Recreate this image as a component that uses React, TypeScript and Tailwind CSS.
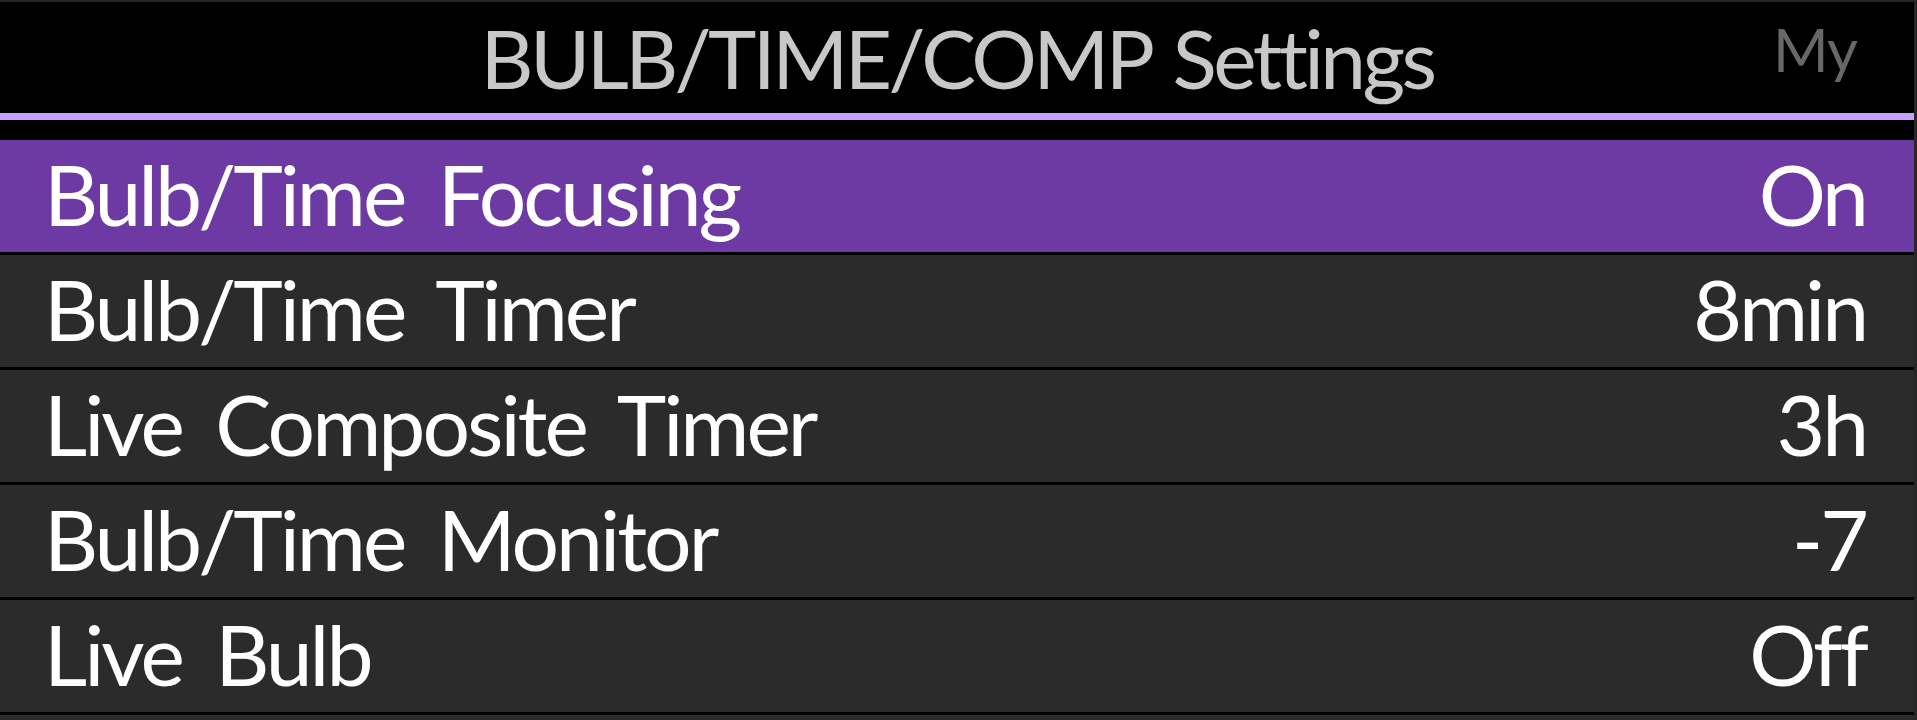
import React from 'react';

const rows = [
  { label: 'Bulb/Time Focusing', value: 'On' },
  { label: 'Bulb/Time Timer', value: '8min' },
  { label: 'Live Composite Timer', value: '3h' },
  { label: 'Bulb/Time Monitor', value: '-7' },
  { label: 'Live Bulb', value: 'Off' },
];

const font = { fontFamily: 'Lato, "Open Sans", sans-serif' };

export default function App() {
  const selected = 0;

  return (
    <div className="w-full h-[720px] overflow-hidden bg-[#262626] pt-[2px] pr-[3px]" style={font}>
      {/* header */}
      <div className="bg-black">
        <div className="h-[111px] grid grid-cols-[1fr_auto_1fr] items-center">
          <div />
          <h1 className="text-[82px] leading-none font-normal tracking-[-3.6px] text-[#c8c8c8] pb-[2px] whitespace-nowrap [word-spacing:6px]">
            BULB/TIME/COMP Settings
          </h1>
          <div className="flex justify-end pr-[57px] pb-[18px]">
            <span className="text-[60px] leading-none tracking-[-1px] text-[#676767]">My</span>
          </div>
        </div>
        <div className="h-[7px] bg-[#c9a0fb]" />
        <div className="h-[20px]" />
      </div>

      {/* menu rows */}
      <div className="flex flex-col gap-[3px] bg-black pb-[3px]">
        {rows.map((row, i) => (
          <div
            key={row.label}
            className={`h-[112px] flex items-center justify-between pl-[44px] pr-[48px] text-white text-[84px] leading-none tracking-[-3px] ${
              i === selected ? 'bg-[#6d3aa4]' : 'bg-[#2b2b2b]'
            }`}
          >
            <span className="pb-[4px] whitespace-nowrap [word-spacing:15px]">{row.label}</span>
            <span className="pb-[4px] whitespace-nowrap">{row.value}</span>
          </div>
        ))}
      </div>
      <div className="h-[20px] bg-[#2b2b2b]" />
    </div>
  );
}
